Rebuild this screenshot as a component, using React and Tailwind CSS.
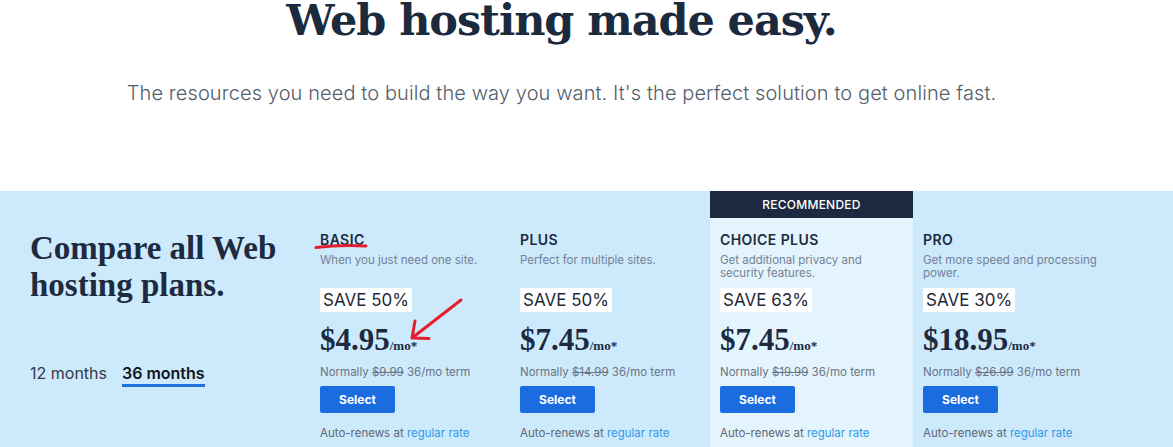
import React from 'react';

const plans = [
  {
    name: 'BASIC',
    desc: 'When you just need one site.',
    save: 'SAVE 50%',
    price: '$4.95',
    normal: '$9.99',
  },
  {
    name: 'PLUS',
    desc: 'Perfect for multiple sites.',
    save: 'SAVE 50%',
    price: '$7.45',
    normal: '$14.99',
  },
  {
    name: 'CHOICE PLUS',
    desc: 'Get additional privacy and security features.',
    save: 'SAVE 63%',
    price: '$7.45',
    normal: '$19.99',
    recommended: true,
  },
  {
    name: 'PRO',
    desc: 'Get more speed and processing power.',
    save: 'SAVE 30%',
    price: '$18.95',
    normal: '$26.99',
  },
];

const PlanColumn = ({ plan, width }) => (
  <div className={`${width} flex flex-col ${plan.recommended ? 'bg-[#e3f4fd]' : ''}`}>
    {/* top bar, only the recommended one shows it */}
    <div
      className={`h-[27px] flex items-center justify-center text-[12px] font-medium tracking-[0.02em] ${
        plan.recommended ? 'bg-[#1d2940] text-white' : ''
      }`}
    >
      {plan.recommended ? 'RECOMMENDED' : ''}
    </div>

    <div className="pl-[10px] flex flex-col items-start">
      <div className="mt-[14px] text-[14px] leading-[16px] font-semibold tracking-[0.03em] text-[#1e2a3f]">
        {plan.name}
      </div>
      <div className="mt-[6px] w-[178px] h-[26px] text-[11.5px] leading-[13px] text-[#748195]">
        {plan.desc}
      </div>
      <div className="mt-[8px] bg-white px-[3px] h-[24px] leading-[24px] text-[17px] text-[#1f2937]">
        {plan.save}
      </div>
      <div className="mt-[11px] h-[34px] leading-[34px] [font-family:'Liberation_Serif',serif] font-bold text-[#1e2a3f]">
        <span className="text-[31px]">{plan.price}</span>
        <span className="text-[13px]">/mo*</span>
      </div>
      <div className="mt-[8px] text-[11.5px] leading-[14px] text-[#6b7484]">
        Normally <span className="line-through">{plan.normal}</span> 36/mo term
      </div>
      <button className="mt-[7px] w-[75px] h-[27px] rounded-[2px] bg-[#1b6ce0] text-white text-[12px] font-bold">
        Select
      </button>
      <div className="mt-[13px] text-[11.5px] leading-[14px] text-[#5d6674]">
        Auto-renews at <span className="text-[#3597e6]">regular rate</span>
      </div>
    </div>
  </div>
);

const App = () => {
  return (
    <div className="w-[1173px] h-[447px] overflow-hidden bg-white [font-family:Inter,sans-serif]">
      <div className="w-[1123px] h-[191px] flex flex-col items-center">
        <h1 className="-mt-[2px] text-[43px] leading-[44px] font-bold [font-family:'DejaVu_Serif',serif] tracking-[-0.025em] text-[#1c2a3e]">
          Web hosting made easy.
        </h1>
        <p className="mt-[37px] text-[20px] leading-[28px] font-light tracking-[0.005em] text-[#545d6a]">
          The resources you need to build the way you want. It's the perfect solution to get online fast.
        </p>
      </div>

      <section className="relative flex h-[256px] bg-[#cceafc]">
        <div className="w-[310px] pl-[30px] pt-[39px]">
          <h2 className="text-[33px] leading-[37px] font-bold [font-family:'Liberation_Serif',serif] text-[#1e2a3f]">
            Compare all Web
            <br />
            hosting plans.
          </h2>
          <div className="mt-[59px] flex items-start gap-[15px] text-[16px] leading-[21px]">
            <span className="text-[#333a44]">12 months</span>
            <span className="font-semibold text-[#111418] border-b-[3px] border-[#1f6fe0]">
              36 months
            </span>
          </div>
        </div>

        <PlanColumn plan={plans[0]} width="w-[200px]" />
        <PlanColumn plan={plans[1]} width="w-[200px]" />
        <PlanColumn plan={plans[2]} width="w-[203px]" />
        <PlanColumn plan={plans[3]} width="w-[201px]" />

        {/* red hand-drawn marks */}
        <svg
          className="absolute left-0 top-0 pointer-events-none"
          width="1173"
          height="256"
          viewBox="0 0 1173 256"
          fill="none"
        >
          <path
            d="M316 56.5 Q340 53.5 366 55"
            stroke="#e11f2d"
            strokeWidth="3"
            strokeLinecap="round"
          />
          <path
            d="M461 109 L412 147 M415 130 L412 147 L429 147.5"
            stroke="#e41f2d"
            strokeWidth="3"
            strokeLinecap="round"
            strokeLinejoin="round"
          />
        </svg>
      </section>
    </div>
  );
};

export default App;
